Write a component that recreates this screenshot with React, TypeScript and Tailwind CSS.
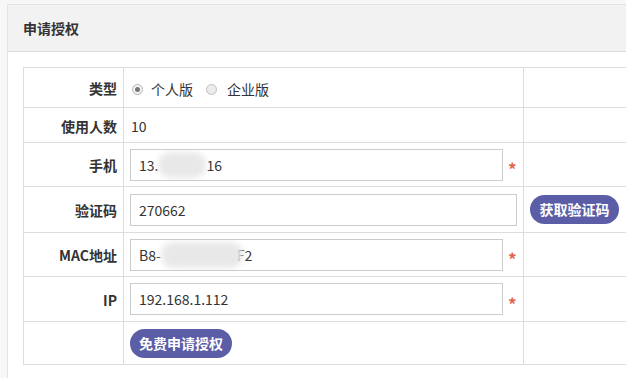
import React from "react";

const font = { fontFamily: '"Noto Sans CJK SC", "Noto Sans", sans-serif' };

const Blur: React.FC<{ w: string }> = ({ w }) => (
  <span className={`inline-block h-[26px] ${w} rounded-full bg-[#e8e8e8] blur-[3px] align-middle`} />
);

const Star = () => (
  <span className="ml-[5px] translate-y-[4px] text-[#e2654f] text-[17px] font-bold leading-none">*</span>
);

const Label: React.FC<{ children: React.ReactNode }> = ({ children }) => (
  <td className="w-[100px] border border-[#dddddd] pr-[6px] pt-[2px] text-right text-[14px] font-bold text-[#333]">{children}</td>
);

export default function App() {
  return (
    <div className="w-[626px] h-[378px] overflow-hidden bg-[#f7f7f7] pl-[7px] pt-[4px]" style={font}>
      <div className="w-[700px] h-[400px] border border-[#e3e3e3] bg-white">
        <div className="h-[47px] border-b border-[#dcdcdc] bg-[#f2f2f2] pl-[15px] flex items-center">
          <span className="text-[14px] font-bold text-[#333]">申请授权</span>
        </div>
        <div className="p-[15px]">
          <table className="w-[680px] border-collapse text-[14px] text-[#333]">
            <tbody>
              <tr className="h-[40px]">
                <Label>类型</Label>
                <td className="w-[400px] border border-[#dddddd] pl-[8px] pt-[3px]">
                  <div className="flex items-center">
                    <span className="w-[11px] h-[11px] rounded-full border border-[#b5b5b5] bg-[#f4f4f4] flex items-center justify-center">
                      <span className="w-[5px] h-[5px] rounded-full bg-[#777]" />
                    </span>
                    <span className="ml-[8px]">个人版</span>
                    <span className="ml-[13px] w-[11px] h-[11px] rounded-full border border-[#c0c0c0] bg-[#ececec]" />
                    <span className="ml-[10px]">企业版</span>
                  </div>
                </td>
                <td className="border border-[#dddddd]" />
              </tr>
              <tr className="h-[35px]">
                <Label>使用人数</Label>
                <td className="border border-[#dddddd] pl-[7px] pt-[2px]">10</td>
                <td className="border border-[#dddddd]" />
              </tr>
              <tr className="h-[44px]">
                <Label>手机</Label>
                <td className="border border-[#dddddd] pl-[6px]">
                  <div className="flex items-center">
                    <div className="w-[373px] h-[32px] border border-[#cccccc] pl-[8px] pt-[1px] flex items-center overflow-hidden whitespace-nowrap">
                      <span>13.</span>
                      <Blur w="w-[48px]" />
                      <span>16</span>
                    </div>
                    <Star />
                  </div>
                </td>
                <td className="border border-[#dddddd]" />
              </tr>
              <tr className="h-[46px]">
                <Label>验证码</Label>
                <td className="border border-[#dddddd] pl-[6px]">
                  <div className="w-[387px] h-[32px] border border-[#cccccc] pl-[8px] pt-[1px] flex items-center">270662</div>
                </td>
                <td className="border border-[#dddddd] pl-[6px]">
                  <button className="h-[29px] w-[89px] rounded-full bg-[#5b5ea6] text-white text-[14px] font-bold">获取验证码</button>
                </td>
              </tr>
              <tr className="h-[44px]">
                <Label>MAC地址</Label>
                <td className="border border-[#dddddd] pl-[6px]">
                  <div className="flex items-center">
                    <div className="w-[373px] h-[32px] border border-[#cccccc] pl-[8px] pt-[1px] flex items-center overflow-hidden whitespace-nowrap">
                      <span>B8-</span>
                      <Blur w="w-[82px]" />
                      <span className="-ml-[6px]">F2</span>
                    </div>
                    <Star />
                  </div>
                </td>
                <td className="border border-[#dddddd]" />
              </tr>
              <tr className="h-[45px]">
                <Label>IP</Label>
                <td className="border border-[#dddddd] pl-[6px]">
                  <div className="flex items-center">
                    <div className="w-[373px] h-[32px] border border-[#cccccc] pl-[8px] pt-[1px] flex items-center">192.168.1.112</div>
                    <Star />
                  </div>
                </td>
                <td className="border border-[#dddddd]" />
              </tr>
              <tr className="h-[43px]">
                <td className="border border-[#dddddd]" />
                <td className="border border-[#dddddd] pl-[6px]">
                  <button className="h-[29px] w-[102px] rounded-full bg-[#5b5ea6] text-white text-[14px] font-bold">免费申请授权</button>
                </td>
                <td className="border border-[#dddddd]" />
              </tr>
            </tbody>
          </table>
        </div>
      </div>
    </div>
  );
}
